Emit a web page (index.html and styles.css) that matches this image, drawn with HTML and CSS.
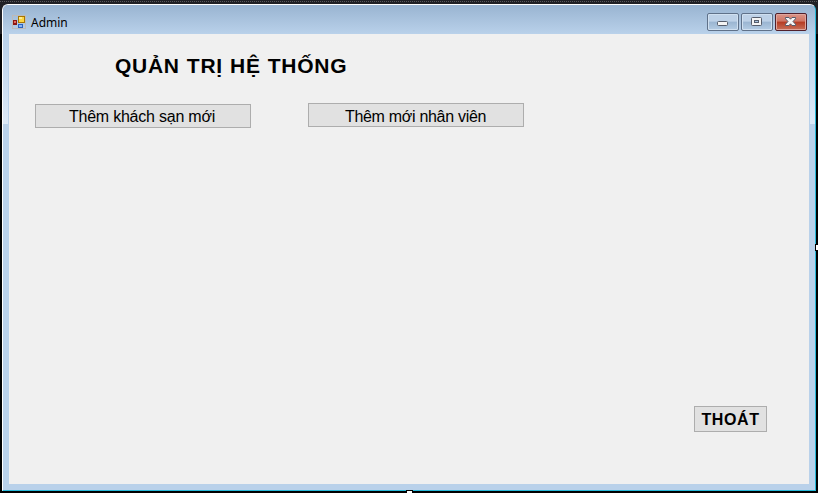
FILE: index.html
```
<!DOCTYPE html>
<html lang="vi">
<head>
<meta charset="utf-8">
<title>Admin</title>
<link rel="stylesheet" href="styles.css">
</head>
<body>
<div class="window">
  <header class="titlebar">
    <svg class="app-icon" width="14" height="14" viewBox="0 0 14 14" shape-rendering="crispEdges">
      <rect x=".5" y=".5" width="13" height="13" fill="none" stroke="#bdbab8"/>
      <rect x="6" y="1" width="7" height="7" fill="#a87500"/>
      <rect x="7" y="2" width="5" height="5" fill="#fbd545"/>
      <rect x="7" y="2" width="3" height="2" fill="#ffeb91"/>
      <rect x="1" y="5" width="4" height="5" fill="#8c1712"/>
      <rect x="2" y="6" width="2" height="2" fill="#e26a5c"/>
      <rect x="6" y="9" width="5" height="4" fill="#2c62bd"/>
      <rect x="7" y="10" width="3" height="2" fill="#86b4f5"/>
    </svg>
    <span class="caption">Admin</span>
    <div class="controls">
      <span class="control"><svg width="32" height="18" viewBox="0 0 32 18"><rect x="10.500" y="8.500" width="10" height="4" rx="1" fill="#f4f4f4" stroke="#565d6b"/></svg></span>
      <span class="control"><svg width="32" height="18" viewBox="0 0 32 18"><rect x="10.500" y="4.500" width="10" height="8" rx="1" fill="#f4f4f4" stroke="#565d6b"/><rect x="13.500" y="7.500" width="4" height="2" fill="#a9c3de" stroke="#565d6b"/></svg></span>
      <span class="control close"><svg width="32" height="18" viewBox="0 0 32 18"><path d="M10.500 4.500h3.500l1.500 1.700 1.500-1.700h3.500v1.300l-2.500 2.700 2.500 2.700v1.300h-3.500l-1.500-1.700-1.500 1.700h-3.500v-1.300l2.500-2.700-2.500-2.700z" fill="#f6f6f6" stroke="#555c6b"/></svg></span>
    </div>
  </header>
  <main class="form">
    <h1 class="heading">QUẢN TRỊ HỆ THỐNG</h1>
    <div class="actions">
      <button class="button hotel"><span>Thêm khách sạn mới</span></button>
      <button class="button staff"><span>Thêm mới nhân viên</span></button>
    </div>
    <button class="button exit"><span>THOÁT</span></button>
  </main>
</div>
<i class="handle handle-right"></i>
<i class="handle handle-bottom"></i>
</body>
</html>
```
FILE: styles.css
```
* { box-sizing: border-box; }
body {
  margin: 0;
  width: 818px;
  height: 493px;
  padding: 4px 2px 2px;
  overflow: hidden;
  position: relative;
  background: repeating-linear-gradient(90deg, #58585b 0 1px, #202024 1px 2px) 0 1px / 100% 1px no-repeat,
    linear-gradient(#202024 0 34px, #000 34px);
  font-family: "Liberation Sans", Arial, sans-serif;
  color: #000;
}
.window {
  display: flex;
  flex-direction: column;
  width: 814px;
  height: 487px;
  padding: 0 6px;
  border: 1px solid #fff;
  border-right-color: #27b9d9;
  border-bottom-color: #27b9d9;
  border-radius: 6px 6px 0 0;
  background: linear-gradient(#99b4d1 0, #b9d1ea 29px, #dce9f7 119px, #b9d1ea 119px);
}
.titlebar {
  display: flex;
  align-items: flex-start;
  height: 29px;
  flex: none;
  margin: 0 -6px;
  padding: 0 8px 0 9px;
  background: linear-gradient(#99b4d1, #b9d1ea);
  border-radius: 5px 5px 0 0;
}
.app-icon { margin-top: 10px; }
.caption {
  margin: 9px 0 0 5px;
  font: 12px/18px "Noto Sans", sans-serif;
}
.controls { display: flex; gap: 2px; margin: 8px 0 0 auto; }
.control {
  width: 32px;
  height: 18px;
  border: 1px solid #5f7189;
  border-radius: 2px;
  box-shadow: inset 0 0 0 1px #d0e0f0;
  background: linear-gradient(#bdd1e7 0 45%, #9ab5d1 50%, #b4cce4);
}
.control svg { display: block; margin: -1px; }
.close {
  border-color: #51202b;
  box-shadow: inset 0 0 0 1px #dfa69d;
  background: linear-gradient(#dc9487 0, #cf7564 45%, #b53a22 50%, #c77059);
}
.form {
  display: flex;
  flex-direction: column;
  width: 800px;
  height: 450px;
  background: #f0f0f0;
  box-shadow: 0 0 0 1px #b9d1ea;
}
.heading {
  margin: 19px 0 0 106px;
  font-size: 21px;
  line-height: 26px;
  letter-spacing: .72px;
  word-spacing: .6px;
  white-space: nowrap;
}
.actions { display: flex; gap: 57px; margin: 24px 0 0 26px; }
.button {
  display: block;
  padding: 0;
  border: 1px solid #adadad;
  background: #e1e1e1;
  color: #000;
  font: 16px/24px "Liberation Sans", Arial, sans-serif;
  white-space: nowrap;
}
.actions .button { width: 216px; height: 24px; }
.actions .hotel { margin-top: 1px; padding-right: 2px; letter-spacing: -.22px; }
.actions .staff { padding-top: 1px; padding-right: 1px; letter-spacing: -.3px; }
.exit {
  width: 73px;
  height: 26px;
  margin: auto 42px 52px auto;
  padding-top: 1px;
  font-weight: bold;
  letter-spacing: .6px;
}
.handle {
  position: absolute;
  background: #fff;
  border: 1px solid #000;
}
.handle-right { left: 815px; top: 244px; width: 5px; height: 7px; }
.handle-bottom { left: 406px; top: 490px; width: 7px; height: 5px; }
```
